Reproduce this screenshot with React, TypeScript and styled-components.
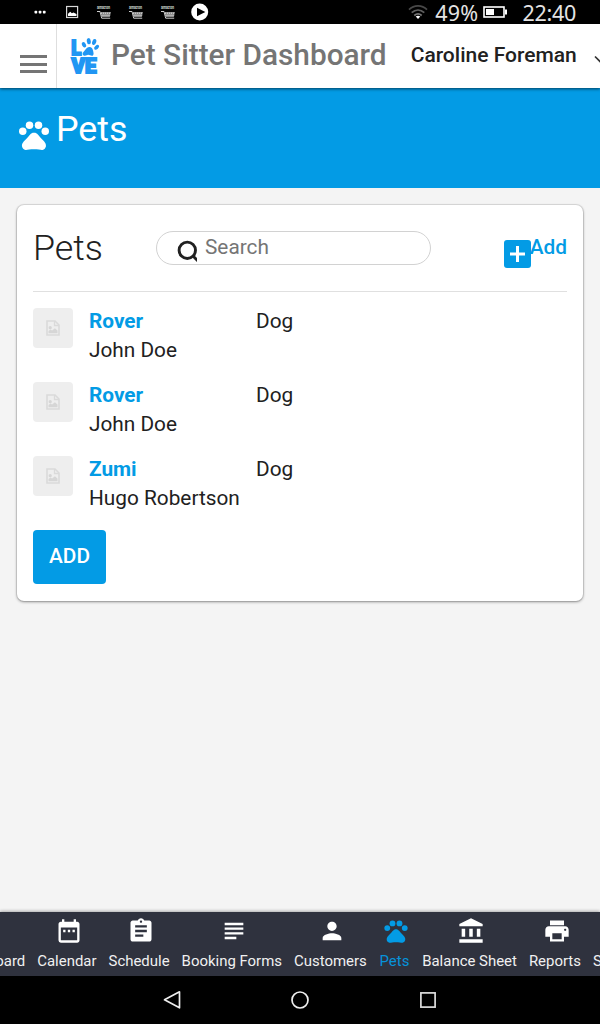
import React from 'react';
import styled, { createGlobalStyle } from 'styled-components';
import {
  MdAccountBalance,
  MdAssignment,
  MdDashboard,
  MdDateRange,
  MdPerson,
  MdPets,
  MdPrint,
  MdSettings,
  MdSubject,
} from 'react-icons/md';

const BLUE = '#039be5';

const GlobalStyle = createGlobalStyle`
  * { box-sizing: border-box; }
  body {
    margin: 0;
    background: #f4f4f4;
    color: #212121;
    font-family: Roboto, "Liberation Sans", sans-serif;
    font-size: 20.8px;
    line-height: 29px;
  }
  h1, h2, p { margin: 0; }
  svg { display: block; flex: none; }
`;

const Screen = styled.div`
  display: flex;
  flex-direction: column;
  width: 600px;
  height: 1024px;
  overflow: hidden;
`;

/* Device status bar */
const StatusBar = styled.div`
  display: flex;
  align-items: center;
  justify-content: space-between;
  height: 24px;
  flex: none;
  padding: 0 24px 0 34px;
  background: #000;
  color: #e4e4e4;
`;

const StatusGroup = styled.div`
  display: flex;
  align-items: center;
`;

const StatusText = styled.span<{ $left: number; $tracking: number }>`
  margin-left: ${(p) => p.$left}px;
  padding-top: 2px;
  font-family: "Noto Sans", sans-serif;
  font-size: 21.5px;
  line-height: 24px;
  letter-spacing: ${(p) => p.$tracking}px;
`;

/* App header */
const Header = styled.header`
  display: flex;
  height: 64px;
  flex: none;
  background: #fff;
  box-shadow: 0 1px 3px rgba(0, 0, 0, 0.6);
  z-index: 1;
`;

const MenuButton = styled.button`
  display: flex;
  flex-direction: column;
  justify-content: flex-start;
  gap: 4.5px;
  width: 57px;
  height: 64px;
  flex: none;
  padding: 31px 0 0 20px;
  border: 0;
  border-right: 1px solid #dedede;
  background: none;
`;

const MenuLine = styled.span`
  width: 27px;
  height: 3px;
  background: #757575;
`;

const Brand = styled.div`
  display: flex;
  padding: 12px 0 0 13px;
`;

const BrandName = styled.h1`
  margin-left: 10px;
  color: #757575;
  font-size: 29.8px;
  font-weight: 500;
  line-height: 38px;
  white-space: nowrap;
`;

const UserName = styled.div`
  margin-left: 24px;
  padding-top: 17px;
  font-size: 21px;
  font-weight: 500;
  white-space: nowrap;
`;

const UserArrow = styled.div`
  width: 6px;
  margin-left: auto;
  padding-top: 31px;
  overflow: hidden;
`;

/* Page banner */
const Banner = styled.div`
  display: flex;
  height: 100px;
  flex: none;
  padding: 19px 0 0 16px;
  background: ${BLUE};
  color: #fff;
`;

const BannerIcon = styled.div`
  padding-top: 10px;
`;

const BannerTitle = styled.h2`
  margin-left: 4px;
  font-size: 35.8px;
  font-weight: 400;
  line-height: 44px;
`;

const Content = styled.main`
  flex: 1;
  padding: 17px 17px 0;
`;

const Card = styled.section`
  height: 395.5px;
  padding: 0 16px;
  border-radius: 7px;
  background: #fff;
  box-shadow: 0 0 0 1px rgba(0, 0, 0, 0.08), 0 1px 3px rgba(0, 0, 0, 0.4);
`;

const CardHeader = styled.div`
  display: flex;
  height: 87px;
  border-bottom: 1px solid #e0e0e0;
`;

const CardTitle = styled.h2`
  width: 123px;
  padding-top: 21px;
  font-size: 35.8px;
  font-weight: 300;
  line-height: 44px;
`;

const SearchField = styled.label`
  display: flex;
  width: 275px;
  height: 34px;
  margin-top: 26px;
  padding-left: 20px;
  border: 1px solid #d2d2d2;
  border-radius: 17px;
  color: #757575;
`;

const SearchIcon = styled.span`
  padding-top: 8px;
`;

const SearchText = styled.span`
  margin-left: 8px;
  padding-top: 1px;
`;

const AddLink = styled.a`
  display: flex;
  margin-left: auto;
  padding-top: 28px;
  color: ${BLUE};
  font-weight: 500;
`;

const AddIcon = styled.span`
  padding-top: 7px;
  margin-right: -1px;
`;

const PetList = styled.div`
  display: flex;
  flex-direction: column;
  gap: 16px;
  padding-top: 16px;
`;

const PetRow = styled.div`
  display: flex;
  height: 58px;
`;

const Thumbnail = styled.div`
  display: flex;
  align-items: center;
  justify-content: center;
  width: 40px;
  height: 40px;
  margin-right: 16px;
  border-radius: 4px;
  background: #eee;
`;

const PetInfo = styled.div`
  width: 167px;
  margin-top: -1px;
  white-space: nowrap;
`;

const PetKind = styled.div`
  margin-top: -1px;
`;

const PetName = styled.p`
  color: ${BLUE};
  font-weight: 700;
`;

const AddButton = styled.button`
  display: block;
  width: 73px;
  height: 54px;
  margin-top: 16px;
  padding: 0 0 2px;
  border: 0;
  border-radius: 4px;
  background: ${BLUE};
  color: #fff;
  font-family: inherit;
  font-size: 20.8px;
  font-weight: 500;
`;

/* Bottom tab strip */
const TabBar = styled.nav`
  height: 64px;
  flex: none;
  overflow: hidden;
  background: #2f323e;
  box-shadow: 0 -1px 3px rgba(0, 0, 0, 0.3);
`;

const TabTrack = styled.div`
  display: flex;
  width: max-content;
  margin-left: -53px;
`;

const Tab = styled.a<{ $active?: boolean }>`
  display: flex;
  flex-direction: column;
  align-items: center;
  padding: 5px 6px 0;
  color: ${(p) => (p.$active ? BLUE : '#fff')};
  font-size: 14.95px;
  line-height: 20px;
  white-space: nowrap;

  svg {
    margin: 0 0 6px 3.5px;
  }
  &:first-child svg {
    margin-left: -2px;
  }
  span {
    opacity: 0.93;
  }
`;

/* Device navigation bar */
const DeviceNav = styled.div`
  display: flex;
  align-items: center;
  justify-content: center;
  gap: 108px;
  height: 48px;
  flex: none;
  background: #000;
`;

const CartNotification = () => (
  <svg width="16" height="18" viewBox="0 -2 16 18" overflow="visible">
    <text x="1" y="4" fontSize="5" fontWeight="700" textLength="13" lengthAdjust="spacingAndGlyphs" fill="#d0d0d0">
      amazon
    </text>
    <path d="M1 6.500h3l1.700 6.700h8.500" fill="none" stroke="#d0d0d0" strokeWidth="1" />
    <path d="M4.500 7H15l-1.200 5H5.600z" fill="#8c8c8c" />
    <path d="M5 8.200h9.600M5.500 10.400h8.600" stroke="#dedede" strokeWidth="1" strokeDasharray="1 1" />
  </svg>
);

const LoveLogo = () => (
  <svg width="31" height="40" viewBox="0 0 31 40" fill="#2196f3">
    <g fontFamily="Roboto, sans-serif" fontWeight="900" stroke="#2196f3" strokeWidth="1.800">
      <text x="1.200" y="19" fontSize="20" textLength="10" lengthAdjust="spacingAndGlyphs">L</text>
      <text x="1.500" y="36.600" fontSize="20" textLength="25" lengthAdjust="spacingAndGlyphs">VE</text>
    </g>
    <ellipse cx="14" cy="8.800" rx="1.900" ry="2.800" transform="rotate(-28 14 8.800)" />
    <ellipse cx="18.800" cy="5.200" rx="2" ry="3.100" transform="rotate(-8 18.800 5.200)" />
    <ellipse cx="24.200" cy="6" rx="2" ry="3.100" transform="rotate(18 24.200 6)" />
    <ellipse cx="26.600" cy="11.300" rx="1.800" ry="2.900" transform="rotate(48 26.600 11.300)" />
    <path d="M18.400 11.200c3-.7 4.500 1.700 4.800 4.100.3 1.700.8 3.100-.3 4.200-1.600 1-3.100-.9-5.300-.6-2 .2-3.300 1.600-4.600.2-1.100-1.700.4-3.100 1.500-4.400 1.200-1.500 1.800-3 3.900-3.500z" />
  </svg>
);

const ImagePlaceholder = () => (
  <svg width="14" height="16" viewBox="0 0 14 16">
    <path d="M1 1h8l4 4v10H1z" fill="none" stroke="#dadada" strokeWidth="1.600" />
    <path d="M8.500 1v4.500H13" fill="none" stroke="#dadada" strokeWidth="1.300" />
    <circle cx="4.200" cy="7.700" r="1.600" fill="#d6d6d6" />
    <path d="M2.500 13.300v-2.300l2-1.500 1.600 1 2.800-2.300 2.600 2.300v2.800z" fill="#d6d6d6" />
  </svg>
);

const pets = [
  { name: 'Rover', owner: 'John Doe', kind: 'Dog' },
  { name: 'Rover', owner: 'John Doe', kind: 'Dog' },
  { name: 'Zumi', owner: 'Hugo Robertson', kind: 'Dog' },
];

const tabs = [
  { label: 'Dashboard', Icon: MdDashboard },
  { label: 'Calendar', Icon: MdDateRange },
  { label: 'Schedule', Icon: MdAssignment },
  { label: 'Booking Forms', Icon: MdSubject },
  { label: 'Customers', Icon: MdPerson },
  { label: 'Pets', Icon: MdPets, active: true },
  { label: 'Balance Sheet', Icon: MdAccountBalance },
  { label: 'Reports', Icon: MdPrint },
  { label: 'Settings', Icon: MdSettings },
];

const NotificationIcons = styled(StatusGroup)`
  gap: 16px;
`;

export default function App() {
  return (
    <Screen>
      <GlobalStyle />
      <StatusBar>
        <NotificationIcons>
          <svg width="15" height="16" viewBox="0 0 15 16" fill="#fff">
            <rect x="0.500" y="6.700" width="2.700" height="2.700" rx="0.700" />
            <rect x="4.700" y="6.700" width="2.700" height="2.700" rx="0.700" />
            <rect x="8.900" y="6.700" width="2.700" height="2.700" rx="0.700" />
          </svg>
          <svg width="15" height="16" viewBox="0 0 15 16">
            <rect x="1.600" y="2.500" width="11" height="11" fill="none" stroke="#d8d8d8" strokeWidth="1.200" />
            <path d="M3 12V9.800l2.200-2 1.700 1.500 1.600-.8 3 1.500v2z" fill="#fff" />
          </svg>
          <CartNotification />
          <CartNotification />
          <CartNotification />
          <svg width="18" height="18" viewBox="0 0 18 18" overflow="visible">
            <circle cx="7.700" cy="9" r="8.500" fill="#fff" />
            <path d="M5 4.800 13.300 9 5 13.200z" fill="#000" />
          </svg>
        </NotificationIcons>
        <StatusGroup>
          <svg width="20" height="16" viewBox="0 0 20 16" fill="none" strokeWidth="1.700">
            <path d="M1 5.700c5-5 13-5 18 0" stroke="#484848" />
            <path d="M3.700 8.700c3.800-3.500 8.800-3.500 12.600 0" stroke="#606060" />
            <path d="M6.300 11.500c2.400-2 5-2 7.400 0" stroke="#777" />
            <path d="M7.700 12.500c1.500-1 3.100-1 4.600 0L10 15z" fill="#fff" />
          </svg>
          <StatusText $left={7.5} $tracking={0.3}>49%</StatusText>
          <svg width="29" height="14" viewBox="0 0 29 14">
            <rect x="5" y="2" width="20" height="10" fill="none" stroke="#fff" strokeWidth="1.600" />
            <rect x="7" y="4" width="8" height="6" fill="#fff" />
            <rect x="26" y="4.500" width="2" height="5" fill="#fff" />
          </svg>
          <StatusText $left={15} $tracking={-0.3}>22:40</StatusText>
        </StatusGroup>
      </StatusBar>

      <Header>
        <MenuButton aria-label="Menu">
          <MenuLine />
          <MenuLine />
          <MenuLine />
        </MenuButton>
        <Brand>
          <LoveLogo />
          <BrandName>Pet Sitter Dashboard</BrandName>
        </Brand>
        <UserName>Caroline Foreman</UserName>
        <UserArrow>
          <svg width="12" height="8" viewBox="0 0 12 8">
            <path d="M1 1.500 6 6.500l5-5" fill="none" stroke="#333" strokeWidth="1.700" />
          </svg>
        </UserArrow>
      </Header>

      <Banner>
        <BannerIcon>
          <MdPets size={36} />
        </BannerIcon>
        <BannerTitle>Pets</BannerTitle>
      </Banner>

      <Content>
        <Card>
          <CardHeader>
            <CardTitle>Pets</CardTitle>
            <SearchField>
              <SearchIcon>
                <svg width="20" height="22" viewBox="0 0 20 22" fill="none" stroke="#212121" strokeWidth="2.900">
                  <circle cx="10.300" cy="10.300" r="8.200" />
                  <path d="m16.500 16.500 6 6" />
                </svg>
              </SearchIcon>
              <SearchText>Search</SearchText>
            </SearchField>
            <AddLink>
              <AddIcon>
                <svg width="27" height="28" viewBox="0 0 27 28">
                  <rect width="27" height="28" rx="3" fill={BLUE} />
                  <path d="M13.500 6v16M6 14h15" stroke="#fff" strokeWidth="3" />
                </svg>
              </AddIcon>
              Add
            </AddLink>
          </CardHeader>
          <PetList>
            {pets.map((pet, i) => (
              <PetRow key={i}>
                <Thumbnail>
                  <ImagePlaceholder />
                </Thumbnail>
                <PetInfo>
                  <PetName>{pet.name}</PetName>
                  <p>{pet.owner}</p>
                </PetInfo>
                <PetKind>{pet.kind}</PetKind>
              </PetRow>
            ))}
          </PetList>
          <AddButton>ADD</AddButton>
        </Card>
      </Content>

      <TabBar>
        <TabTrack>
          {tabs.map(({ label, Icon, active }) => (
            <Tab key={label} $active={active}>
              <Icon size={28} />
              <span>{label}</span>
            </Tab>
          ))}
        </TabTrack>
      </TabBar>

      <DeviceNav>
        <svg width="20" height="20" viewBox="0 0 20 20" fill="none" stroke="#eee" strokeWidth="1.700">
          <path d="M17.500 1.800v16L2.500 9.800z" strokeLinejoin="round" />
        </svg>
        <svg width="20" height="20" viewBox="0 0 20 20" fill="none" stroke="#eee" strokeWidth="1.700">
          <circle cx="10" cy="10" r="8" />
        </svg>
        <svg width="20" height="20" viewBox="0 0 20 20" fill="none" stroke="#ddd" strokeWidth="1.700">
          <rect x="2.900" y="2.900" width="14.200" height="14.200" />
        </svg>
      </DeviceNav>
    </Screen>
  );
}
